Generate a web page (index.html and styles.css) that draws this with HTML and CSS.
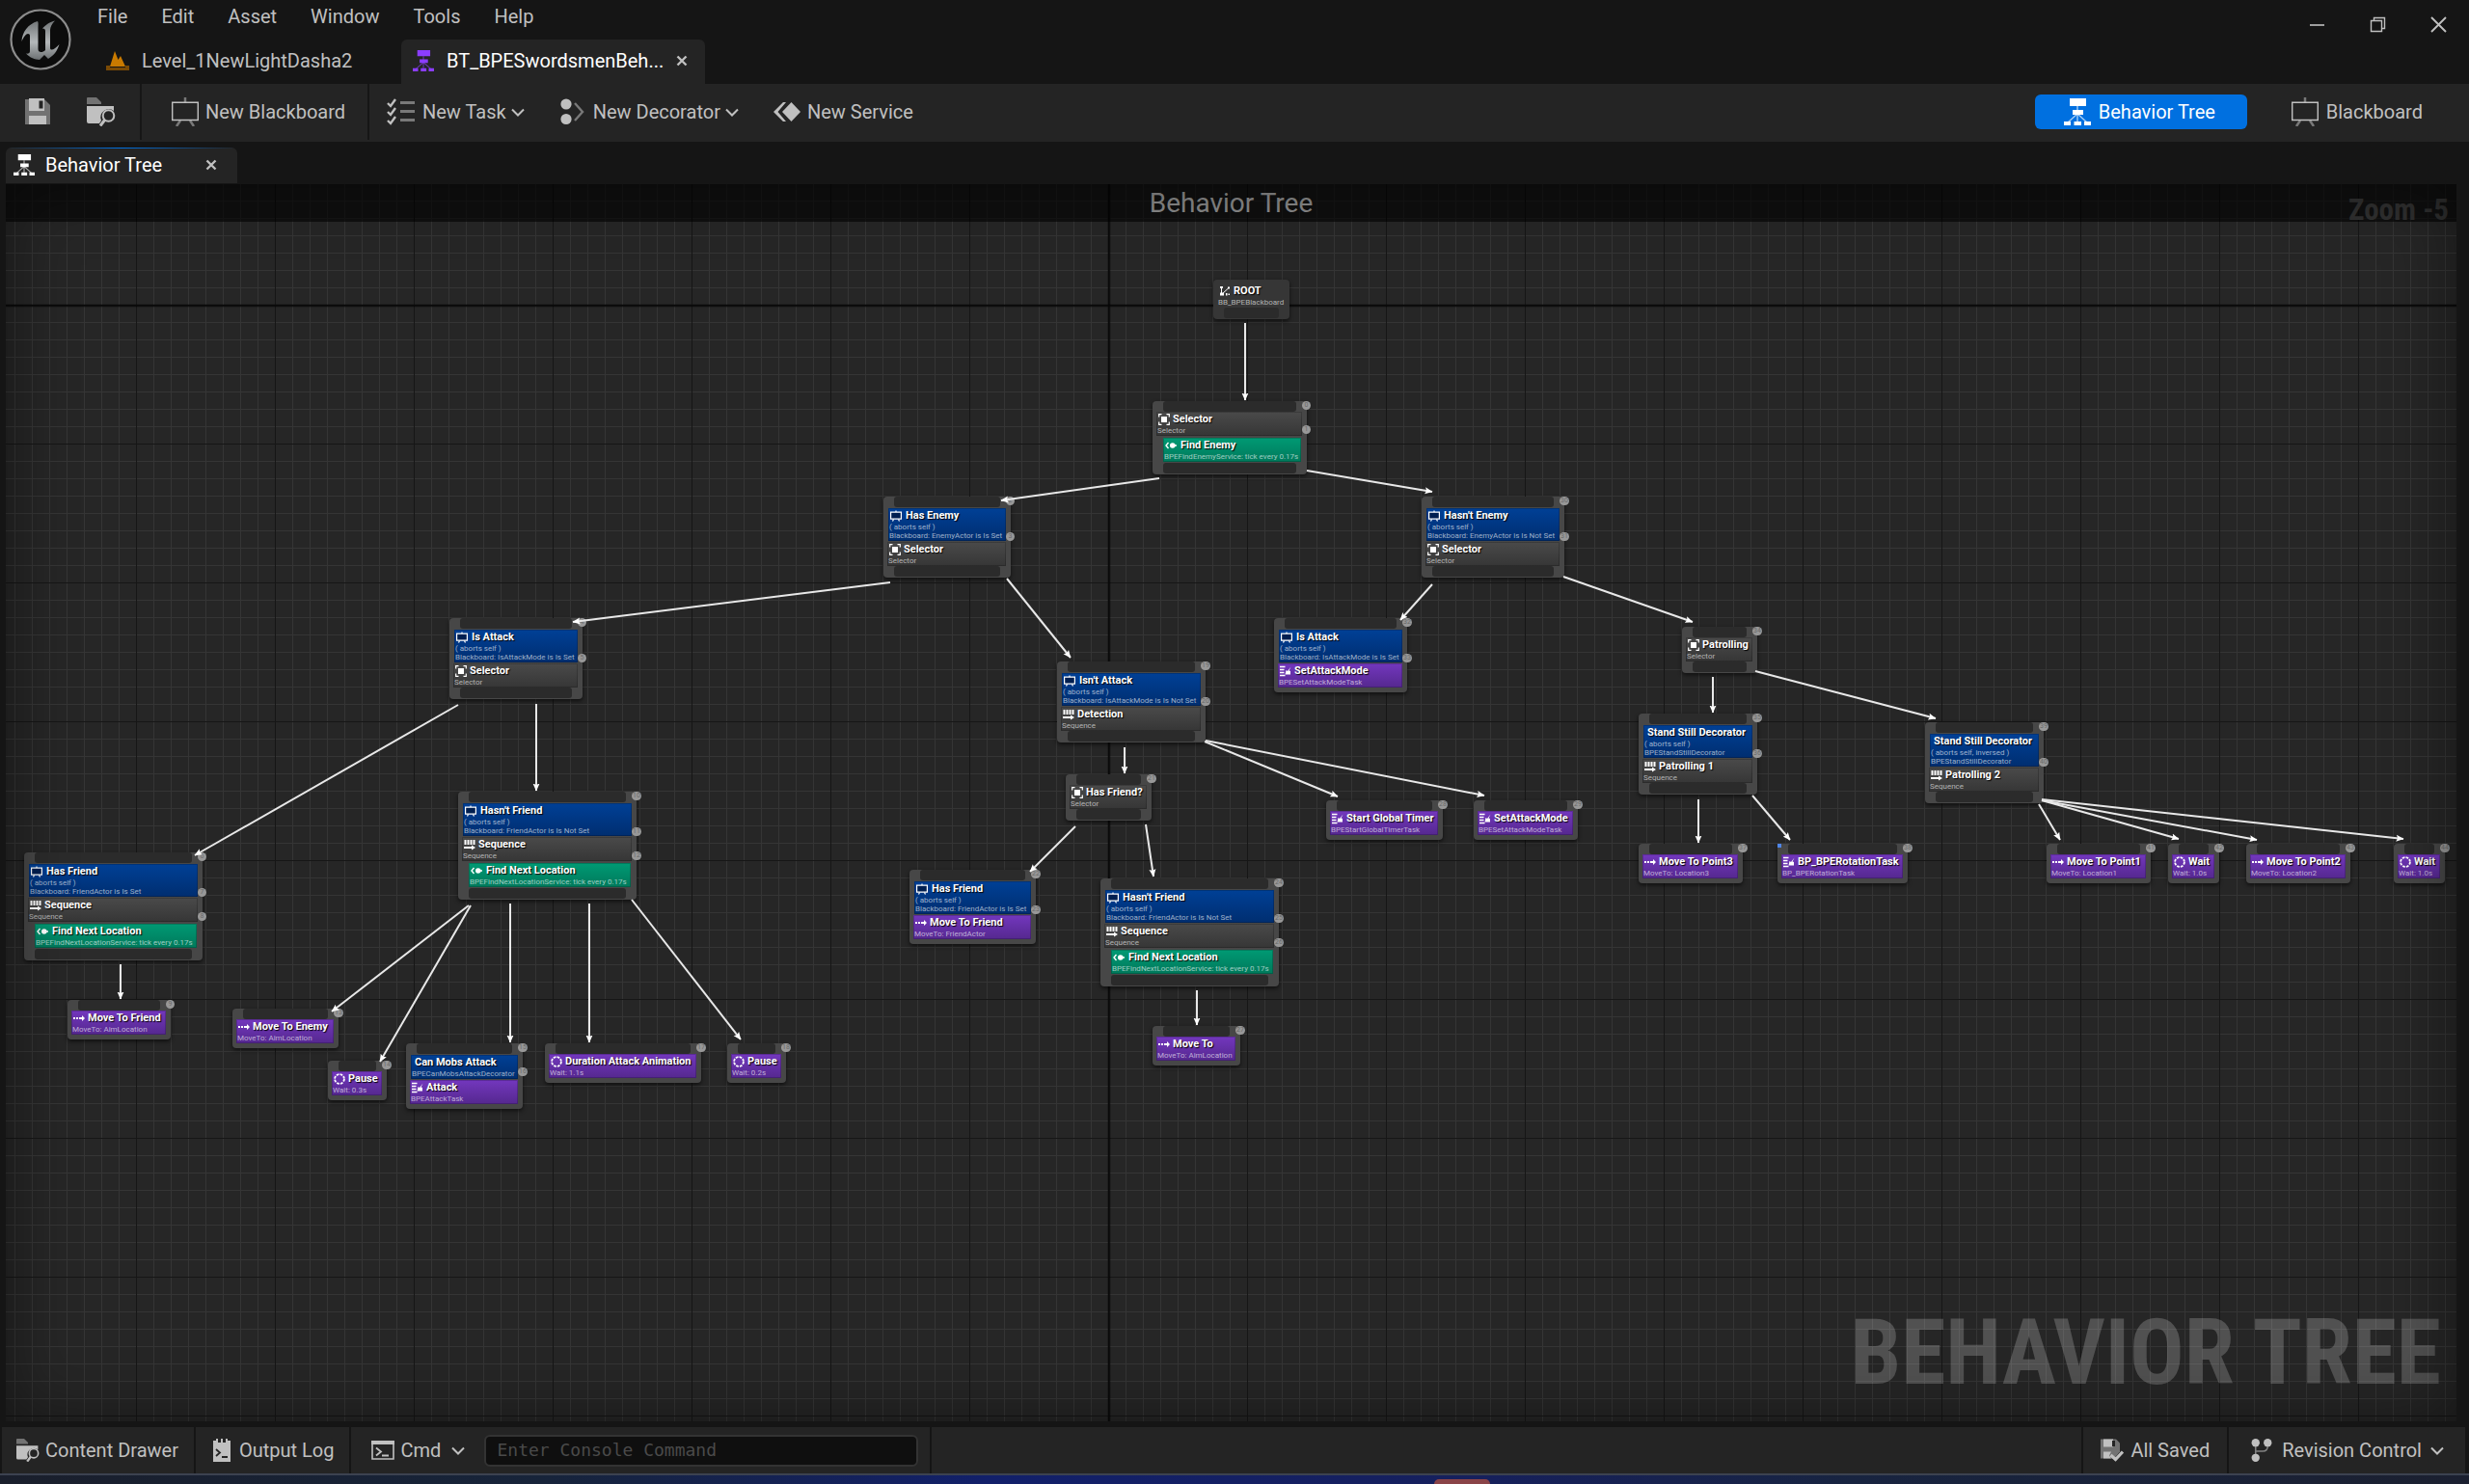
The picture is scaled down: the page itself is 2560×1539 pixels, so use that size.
FILE: index.html
```html
<!DOCTYPE html>
<html lang="en">
<head>
<meta charset="utf-8">
<title>BT_BPESwordsmenBehavior</title>
<link rel="stylesheet" href="styles.css">
</head>
<body>
<svg class="defs" aria-hidden="true">
  <symbol id="i-tree" viewBox="0 0 28 28">
    <path d="M14 8v16M14 16L4 25M14 16l10 9" fill="none" stroke="currentColor" stroke-width="1.4" opacity=".65"/>
    <path d="M6 0h17v8H6zM9 12h11v5H9zM0 24h7v4H0zM10.500 24h7.500v4h-7.500zM21 24h7v4h-7z" fill="currentColor"/>
  </symbol>
  <symbol id="i-board" viewBox="0 0 28 30">
    <path d="M14 0v5M9 24l-4 6M19 24l4 6" fill="none" stroke="currentColor" stroke-width="2.500" opacity=".55"/>
    <path d="M.7 5.200h26.600v18.300H.7z" fill="none" stroke="currentColor" stroke-width="1.400"/>
  </symbol>
  <symbol id="i-save" viewBox="0 0 28 28">
    <path d="M1 1h20l6 6v20H1z" fill="currentColor" opacity=".5"/>
    <path d="M5 0h12v13H5zM5 18h18v9H5z" fill="currentColor"/><path d="M16 0h5v13h-5z" fill="currentColor"/><path d="M15.500 2.500h4v8h-4z" fill="#242424"/>
  </symbol>
  <symbol id="i-browse" viewBox="0 0 30 30">
    <path d="M0 7V1q0-1 1-1h9l5 5v2z" fill="currentColor" opacity=".5"/>
    <path d="M0 9h28v5a8.500 8.500 0 0 0-13 10l-2 3H2q-2 0-2-2z" fill="currentColor"/>
    <circle cx="22.500" cy="19" r="5.800" fill="none" stroke="currentColor" stroke-width="2"/>
    <path d="M18.500 23.500L14 29.500" stroke="currentColor" stroke-width="3"/>
  </symbol>
  <symbol id="i-task" viewBox="0 0 30 28">
    <path d="M1 5l3 3L9 1M1 14l3 3 5-7M1 23l3 3 5-7" fill="none" stroke="currentColor" stroke-width="2.400"/>
    <path d="M14 3h15v3H14zM14 12h15v3H14zM14 21h15v3H14z" fill="currentColor" opacity=".55"/>
  </symbol>
  <symbol id="i-deco" viewBox="0 0 26 28">
    <circle cx="6" cy="6" r="5.600" fill="currentColor"/><circle cx="6" cy="21.500" r="5.600" fill="currentColor"/>
    <path d="M15 5l8 9-8 9" fill="none" stroke="currentColor" stroke-width="2.400" opacity=".55"/>
  </symbol>
  <symbol id="i-serv" viewBox="0 0 28 20">
    <path d="M18.500 0l9.500 10-9.500 10L9 10z" fill="currentColor"/>
    <path d="M10 0h3L4.500 10 13 20h-3L0 10z" fill="currentColor"/>
  </symbol>
  <symbol id="i-chev" viewBox="0 0 14 9"><path d="M1 1.500l6 6 6-6" fill="none" stroke="currentColor" stroke-width="2"/></symbol>
  <symbol id="i-x" viewBox="0 0 12 12"><path d="M1.500 1.500l9 9M10.500 1.500l-9 9" stroke="currentColor" stroke-width="2.400"/></symbol>
  <symbol id="i-level" viewBox="0 0 24 20">
    <path d="M0 17h24v3H0zM0 15h4v3H0zM20 15h4v3h-4z" fill="#7a4a05"/>
    <path d="M4 16L9 0l3.500 9L15 5l5 11z" fill="#c97a00"/>
  </symbol>
  <symbol id="i-log" viewBox="0 0 18 24">
    <path d="M0 2h3V0h2v4h3V0h2v4h3V0h2v2h3v22H0z" fill="currentColor"/>
    <path d="M3 11l4 3.500L3 18M9 19h6" fill="none" stroke="#242424" stroke-width="1.800"/>
  </symbol>
  <symbol id="i-cmd" viewBox="0 0 24 20">
    <path d="M1 1h22v18H1z" fill="none" stroke="currentColor" stroke-width="1.600"/><path d="M0 0h24v4H0z" fill="currentColor"/>
    <path d="M5 7.500l5 4-5 4M11 15.500h7" fill="none" stroke="currentColor" stroke-width="1.800"/>
  </symbol>
  <symbol id="i-saved" viewBox="0 0 24 23">
    <path d="M0 0h16l4 4v9l-6 7H0z" fill="currentColor" opacity=".5"/>
    <path d="M3 0h10v8H3zM3 13h8l-2 4 2 3H3z" fill="currentColor"/><path d="M12 1.500h3v6h-3z" fill="#242424"/>
    <path d="M10.500 16.500l5 4.500L23 13" fill="none" stroke="currentColor" stroke-width="3.200"/>
  </symbol>
  <symbol id="i-branch" viewBox="0 0 20 23">
    <circle cx="4" cy="4" r="4" fill="currentColor"/><circle cx="16" cy="4" r="4" fill="currentColor"/><circle cx="4" cy="19" r="4" fill="currentColor"/>
    <path d="M4 4v15M4 12.500h7q5 0 5-5V4" fill="none" stroke="currentColor" stroke-width="1.500" opacity=".6"/>
  </symbol>
  <symbol id="n-root" viewBox="0 0 12 12"><path d="M2.500 2v7.500L9.500 3" fill="none" stroke="currentColor"/><path d="M1 1h3v2H1zM9 1.500h2v2H9zM1 7.500h4v3H1zM7 8h1.500v2.500H7zM9.500 8.500h1.500v1.500H9.500z" fill="currentColor"/></symbol>
  <symbol id="n-sel" viewBox="0 0 12 12"><path d="M.7 3.500V.7h2.800M8.500.7h2.800v2.800M11.300 8.500v2.800H8.500M3.500 11.300H.7V8.500" fill="none" stroke="currentColor" stroke-width="1.200"/><path d="M3 3h6v6H3z" fill="currentColor"/></symbol>
  <symbol id="n-seq" viewBox="0 0 12 12"><path d="M.5 1h2v5h-2zM3.500 1h2v5h-2zM6.500 1h2v5h-2zM9.500 1h2v5h-2z" fill="currentColor"/><path d="M0 8h8V6.500l4 2.500-4 2.500V10H0z" fill="currentColor"/></symbol>
  <symbol id="n-bb" viewBox="0 0 12 12"><path d="M.6 2.200h10.800v7H.6z" fill="#001f50" stroke="currentColor" stroke-width="1.200"/><path d="M6 .5v1.500M3.500 9.500l-1 2M8.500 9.500l1 2" stroke="currentColor" stroke-width="1.200"/></symbol>
  <symbol id="n-srv" viewBox="0 0 12 12"><circle cx="7.800" cy="6" r="2.800" fill="currentColor"/><path d="M10 6h2M3.500 3L1 6l2.500 3" fill="none" stroke="currentColor" stroke-width="1.400"/></symbol>
  <symbol id="n-move" viewBox="0 0 12 12"><path d="M0 5h2v2H0zM3 5h2v2H3zM6 5h3V3l3 3-3 3V7H6z" fill="currentColor"/></symbol>
  <symbol id="n-task" viewBox="0 0 12 12"><path d="M0 1.500h5.500M0 4.500h4.500M0 7.500h4.500M0 10.500h5.500" stroke="currentColor" stroke-width="1.400"/><path d="M11.500 1.500L9.500 5.500 11 6v3.500L5.500 9.500 6.500 5l1.500 1z" fill="currentColor"/></symbol>
  <symbol id="n-wait" viewBox="0 0 12 12"><circle cx="6" cy="6" r="4.900" fill="none" stroke="currentColor" stroke-width="1.800" stroke-dasharray="2.700 1.150"/></symbol>
</svg>

<header class="titlebar">
  <svg class="logo" viewBox="0 0 64 64" role="img" aria-label="Unreal Engine">
    <defs><linearGradient id="lg" x1="0" y1="0" x2="0" y2="1"><stop offset="0" stop-color="#707476"/><stop offset=".55" stop-color="#b4b8ba"/><stop offset="1" stop-color="#6c7072"/></linearGradient></defs>
    <circle cx="32" cy="32" r="30.500" fill="#0c0c0c" stroke="#8c8c8c" stroke-width="2.200"/>
    <path fill="url(#lg)" d="M29 13C19 16 13 24 12.500 34c2-5 4.500-8 6.500-8 1.300 0 2 .8 2 2v16c0 2-1.500 3-4 2.600 4 4.400 9 6.400 14 6.400l5-5 4 4c6-3.500 9.500-8.500 11.500-15-3 3.500-6 5.500-8 5.500-1 0-1.500-.6-1.500-1.800V22c0-3 2-6.500 5-9.500-5 1-10 4.500-13 8 1.800 0 3 .8 3 2.500v20c-1.500 1.500-3 2-4.500 2-1.800 0-3-1.200-3-3.300V19.500c0-3 .5-4.700-.5-6.500z"/>
  </svg>
  <div class="titlebar-main">
    <nav class="menu">
      <button>File</button><button>Edit</button><button>Asset</button><button>Window</button><button>Tools</button><button>Help</button>
    </nav>
    <div class="doc-tabs">
      <button class="doc-tab"><svg class="ic-level"><use href="#i-level"/></svg><span>Level_1NewLightDasha2</span></button>
      <button class="doc-tab doc-tab-active"><svg class="ic-tab purple"><use href="#i-tree"/></svg><span>BT_BPESwordsmenBeh...</span><svg class="ic-x"><use href="#i-x"/></svg></button>
    </div>
  </div>
  <div class="window-controls">
    <button aria-label="Minimize"><svg viewBox="0 0 17 17"><path d="M1 9h15" stroke="currentColor" stroke-width="1.600"/></svg></button>
    <button aria-label="Restore"><svg viewBox="0 0 17 17"><path d="M1.500 4.500h11v11h-11zM4.500 4V1.500h11v11H13" fill="none" stroke="currentColor" stroke-width="1.400"/></svg></button>
    <button aria-label="Close"><svg viewBox="0 0 17 17"><path d="M1 1l15 15M16 1L1 16" stroke="currentColor" stroke-width="1.900"/></svg></button>
  </div>
</header>

<div class="toolbar">
  <div class="tool-group tool-files">
    <button class="tool" aria-label="Save"><svg class="ic28"><use href="#i-save"/></svg></button>
    <button class="tool" aria-label="Browse"><svg class="ic30"><use href="#i-browse"/></svg></button>
  </div>
  <div class="tool-group tool-board">
    <button class="tool"><svg class="ic-board"><use href="#i-board"/></svg>New Blackboard</button>
  </div>
  <div class="tool-group tool-new">
    <button class="tool"><svg class="ic30"><use href="#i-task"/></svg>New Task<svg class="ic-chev"><use href="#i-chev"/></svg></button>
    <button class="tool"><svg class="ic28"><use href="#i-deco"/></svg>New Decorator<svg class="ic-chev"><use href="#i-chev"/></svg></button>
    <button class="tool"><svg class="ic28"><use href="#i-serv"/></svg>New Service</button>
  </div>
  <div class="modes">
    <button class="mode mode-active"><svg class="ic28"><use href="#i-tree"/></svg>Behavior Tree</button>
    <button class="mode"><svg class="ic-board"><use href="#i-board"/></svg>Blackboard</button>
  </div>
</div>

<div class="panel-tabs">
  <button class="panel-tab"><svg class="ic-tab"><use href="#i-tree"/></svg><span>Behavior Tree</span><svg class="ic-x"><use href="#i-x"/></svg></button>
</div>

<main class="graph">
  <div class="graph-title"><h1>Behavior Tree</h1></div>
  <div class="zoom">Zoom -5</div>
  <div class="watermark">BEHAVIOR TREE</div>

  <article class="node root" style="--x:1252;--y:99;--w:79">
    <div class="root-part"><h2><svg><use href="#n-root"/></svg>ROOT</h2><p>BB_BPEBlackboard</p></div><div class="slot"></div>
  </article>

  <article class="node" style="--x:1189;--y:225;--w:160">
    <div class="slot"></div>
    <div class="part composite"><h2><svg><use href="#n-sel"/></svg>Selector</h2><p>Selector</p></div>
    <div class="part service"><h2><svg><use href="#n-srv"/></svg>Find Enemy</h2><p>BPEFindEnemyService: tick every 0.17s</p></div>
    <div class="slot"></div><div class="index"><b>0</b><b class="near">1</b></div>
  </article>

  <article class="node" style="--x:910;--y:324;--w:132">
    <div class="slot"></div>
    <div class="part decorator"><h2><svg><use href="#n-bb"/></svg>Has Enemy</h2><p>( aborts self )</p><p>Blackboard: EnemyActor is Is Set</p></div>
    <div class="part composite"><h2><svg><use href="#n-sel"/></svg>Selector</h2><p>Selector</p></div>
    <div class="slot"></div><div class="index"><b>2</b><b class="far">3</b></div>
  </article>

  <article class="node" style="--x:1468;--y:324;--w:148">
    <div class="slot"></div>
    <div class="part decorator"><h2><svg><use href="#n-bb"/></svg>Hasn't Enemy</h2><p>( aborts self )</p><p>Blackboard: EnemyActor is Is Not Set</p></div>
    <div class="part composite"><h2><svg><use href="#n-sel"/></svg>Selector</h2><p>Selector</p></div>
    <div class="slot"></div><div class="index"><b>30</b><b class="far">31</b></div>
  </article>

  <article class="node" style="--x:460;--y:450;--w:138">
    <div class="slot"></div>
    <div class="part decorator"><h2><svg><use href="#n-bb"/></svg>Is Attack</h2><p>( aborts self )</p><p>Blackboard: IsAttackMode is Is Set</p></div>
    <div class="part composite"><h2><svg><use href="#n-sel"/></svg>Selector</h2><p>Selector</p></div>
    <div class="slot"></div><div class="index"><b>4</b><b class="far">5</b></div>
  </article>

  <article class="node" style="--x:1090;--y:495;--w:154">
    <div class="slot"></div>
    <div class="part decorator"><h2><svg><use href="#n-bb"/></svg>Isn't Attack</h2><p>( aborts self )</p><p>Blackboard: IsAttackMode is Is Not Set</p></div>
    <div class="part composite"><h2><svg><use href="#n-seq"/></svg>Detection</h2><p>Sequence</p></div>
    <div class="slot"></div><div class="index"><b>19</b><b class="far">20</b></div>
  </article>

  <article class="node leaf" style="--x:1315;--y:450;--w:138">
    <div class="slot"></div>
    <div class="part decorator"><h2><svg><use href="#n-bb"/></svg>Is Attack</h2><p>( aborts self )</p><p>Blackboard: IsAttackMode is Is Set</p></div>
    <div class="part task"><h2><svg><use href="#n-task"/></svg>SetAttackMode</h2><p>BPESetAttackModeTask</p></div>
    <div class="index"><b>32</b><b class="far">33</b></div>
  </article>

  <article class="node" style="--x:1738;--y:459;--w:78">
    <div class="slot"></div>
    <div class="part composite"><h2><svg><use href="#n-sel"/></svg>Patrolling</h2><p>Selector</p></div>
    <div class="slot"></div><div class="index"><b>34</b></div>
  </article>

  <article class="node" style="--x:19;--y:693;--w:185">
    <div class="slot"></div>
    <div class="part decorator"><h2><svg><use href="#n-bb"/></svg>Has Friend</h2><p>( aborts self )</p><p>Blackboard: FriendActor is Is Set</p></div>
    <div class="part composite"><h2><svg><use href="#n-seq"/></svg>Sequence</h2><p>Sequence</p></div>
    <div class="part service"><h2><svg><use href="#n-srv"/></svg>Find Next Location</h2><p>BPEFindNextLocationService: tick every 0.17s</p></div>
    <div class="slot"></div><div class="index"><b>6</b><b class="far">7</b><b class="near">8</b></div>
  </article>

  <article class="node leaf" style="--x:64;--y:846;--w:107">
    <div class="slot"></div>
    <div class="part task"><h2><svg><use href="#n-move"/></svg>Move To Friend</h2><p>MoveTo: AimLocation</p></div>
    <div class="index"><b>9</b></div>
  </article>

  <article class="node" style="--x:469;--y:630;--w:185">
    <div class="slot"></div>
    <div class="part decorator"><h2><svg><use href="#n-bb"/></svg>Hasn't Friend</h2><p>( aborts self )</p><p>Blackboard: FriendActor is Is Not Set</p></div>
    <div class="part composite"><h2><svg><use href="#n-seq"/></svg>Sequence</h2><p>Sequence</p></div>
    <div class="part service"><h2><svg><use href="#n-srv"/></svg>Find Next Location</h2><p>BPEFindNextLocationService: tick every 0.17s</p></div>
    <div class="slot"></div><div class="index"><b>10</b><b class="far">11</b><b class="near">12</b></div>
  </article>

  <article class="node leaf" style="--x:235;--y:855;--w:110">
    <div class="slot"></div>
    <div class="part task"><h2><svg><use href="#n-move"/></svg>Move To Enemy</h2><p>MoveTo: AimLocation</p></div>
    <div class="index"><b>13</b></div>
  </article>

  <article class="node leaf" style="--x:334;--y:909;--w:61">
    <div class="slot"></div>
    <div class="part task"><h2><svg><use href="#n-wait"/></svg>Pause</h2><p>Wait: 0.3s</p></div>
    <div class="index"><b>14</b></div>
  </article>

  <article class="node leaf" style="--x:415;--y:891;--w:121">
    <div class="slot"></div>
    <div class="part decorator plain"><h2>Can Mobs Attack</h2><p>BPECanMobsAttackDecorator</p></div>
    <div class="part task"><h2><svg><use href="#n-task"/></svg>Attack</h2><p>BPEAttackTask</p></div>
    <div class="index"><b>15</b><b class="near">16</b></div>
  </article>

  <article class="node leaf" style="--x:559;--y:891;--w:162">
    <div class="slot"></div>
    <div class="part task"><h2><svg><use href="#n-wait"/></svg>Duration Attack Animation</h2><p>Wait: 1.1s</p></div>
    <div class="index"><b>17</b></div>
  </article>

  <article class="node leaf" style="--x:748;--y:891;--w:61">
    <div class="slot"></div>
    <div class="part task"><h2><svg><use href="#n-wait"/></svg>Pause</h2><p>Wait: 0.2s</p></div>
    <div class="index"><b>18</b></div>
  </article>

  <article class="node" style="--x:1099;--y:612;--w:89">
    <div class="slot"></div>
    <div class="part composite"><h2><svg><use href="#n-sel"/></svg>Has Friend?</h2><p>Selector</p></div>
    <div class="slot"></div><div class="index"><b>21</b></div>
  </article>

  <article class="node leaf" style="--x:1369;--y:639;--w:121">
    <div class="slot"></div>
    <div class="part task"><h2><svg><use href="#n-task"/></svg>Start Global Timer</h2><p>BPEStartGlobalTimerTask</p></div>
    <div class="index"><b>28</b></div>
  </article>

  <article class="node leaf" style="--x:1522;--y:639;--w:108">
    <div class="slot"></div>
    <div class="part task"><h2><svg><use href="#n-task"/></svg>SetAttackMode</h2><p>BPESetAttackModeTask</p></div>
    <div class="index"><b>29</b></div>
  </article>

  <article class="node leaf" style="--x:937;--y:711;--w:131">
    <div class="slot"></div>
    <div class="part decorator"><h2><svg><use href="#n-bb"/></svg>Has Friend</h2><p>( aborts self )</p><p>Blackboard: FriendActor is Is Set</p></div>
    <div class="part task"><h2><svg><use href="#n-move"/></svg>Move To Friend</h2><p>MoveTo: FriendActor</p></div>
    <div class="index"><b>22</b><b class="far">23</b></div>
  </article>

  <article class="node" style="--x:1135;--y:720;--w:185">
    <div class="slot"></div>
    <div class="part decorator"><h2><svg><use href="#n-bb"/></svg>Hasn't Friend</h2><p>( aborts self )</p><p>Blackboard: FriendActor is Is Not Set</p></div>
    <div class="part composite"><h2><svg><use href="#n-seq"/></svg>Sequence</h2><p>Sequence</p></div>
    <div class="part service"><h2><svg><use href="#n-srv"/></svg>Find Next Location</h2><p>BPEFindNextLocationService: tick every 0.17s</p></div>
    <div class="slot"></div><div class="index"><b>24</b><b class="far">25</b><b class="near">26</b></div>
  </article>

  <article class="node leaf" style="--x:1189;--y:873;--w:91">
    <div class="slot"></div>
    <div class="part task"><h2><svg><use href="#n-move"/></svg>Move To</h2><p>MoveTo: AimLocation</p></div>
    <div class="index"><b>27</b></div>
  </article>

  <article class="node" style="--x:1693;--y:549;--w:123">
    <div class="slot"></div>
    <div class="part decorator plain"><h2>Stand Still Decorator</h2><p>( aborts self )</p><p>BPEStandStillDecorator</p></div>
    <div class="part composite"><h2><svg><use href="#n-seq"/></svg>Patrolling 1</h2><p>Sequence</p></div>
    <div class="slot"></div><div class="index"><b>35</b><b class="far">36</b></div>
  </article>

  <article class="node" style="--x:1990;--y:558;--w:123">
    <div class="slot"></div>
    <div class="part decorator plain"><h2>Stand Still Decorator</h2><p>( aborts self, inversed )</p><p>BPEStandStillDecorator</p></div>
    <div class="part composite"><h2><svg><use href="#n-seq"/></svg>Patrolling 2</h2><p>Sequence</p></div>
    <div class="slot"></div><div class="index"><b>39</b><b class="far">40</b></div>
  </article>

  <article class="node leaf" style="--x:1693;--y:684;--w:108">
    <div class="slot"></div>
    <div class="part task"><h2><svg><use href="#n-move"/></svg>Move To Point3</h2><p>MoveTo: Location3</p></div>
    <div class="index"><b>37</b></div>
  </article>

  <article class="node leaf blueprint" style="--x:1837;--y:684;--w:135">
    <div class="slot"></div>
    <div class="part task"><h2><svg><use href="#n-task"/></svg>BP_BPERotationTask</h2><p>BP_BPERotationTask</p></div>
    <div class="index"><b>38</b></div>
  </article>

  <article class="node leaf" style="--x:2116;--y:684;--w:108">
    <div class="slot"></div>
    <div class="part task"><h2><svg><use href="#n-move"/></svg>Move To Point1</h2><p>MoveTo: Location1</p></div>
    <div class="index"><b>41</b></div>
  </article>

  <article class="node leaf" style="--x:2242;--y:684;--w:53">
    <div class="slot"></div>
    <div class="part task"><h2><svg><use href="#n-wait"/></svg>Wait</h2><p>Wait: 1.0s</p></div>
    <div class="index"><b>42</b></div>
  </article>

  <article class="node leaf" style="--x:2323;--y:684;--w:108">
    <div class="slot"></div>
    <div class="part task"><h2><svg><use href="#n-move"/></svg>Move To Point2</h2><p>MoveTo: Location2</p></div>
    <div class="index"><b>43</b></div>
  </article>

  <article class="node leaf" style="--x:2476;--y:684;--w:53">
    <div class="slot"></div>
    <div class="part task"><h2><svg><use href="#n-wait"/></svg>Wait</h2><p>Wait: 1.0s</p></div>
    <div class="index"><b>44</b></div>
  </article>

  <svg class="wires" aria-hidden="true">
    <defs><marker id="arrow" viewBox="0 0 8 8" refX="7.500" refY="4" markerWidth="8" markerHeight="8" markerUnits="userSpaceOnUse" orient="auto"><path d="M0 .5L8 4 0 7.500 1.500 4z" fill="#fff"/></marker></defs>
    <g transform="translate(-6 -191)">
      <path d="M1291 335V415"/><path d="M1202 496L1038 519"/><path d="M1355 488L1485 510"/>
      <path d="M923 604L594 645"/><path d="M1044 600L1110 682"/>
      <path d="M475 731L202 887"/><path d="M556 730V820"/><path d="M125 1000V1036"/>
      <path d="M486 939L344 1049"/><path d="M488 939L394 1101"/><path d="M529 937V1081"/><path d="M611 937V1081"/><path d="M655 933L768 1078"/>
      <path d="M1166 775V802"/><path d="M1249 769L1387 826"/><path d="M1250 768L1539 825"/>
      <path d="M1115 857L1068 904"/><path d="M1188 855L1196 909"/><path d="M1241 1027V1063"/>
      <path d="M1485 606L1452 643"/><path d="M1621 598L1755 645"/>
      <path d="M1776 702V739"/><path d="M1820 696L2007 745"/>
      <path d="M1761 829V874"/><path d="M1817 825L1856 871"/>
      <path d="M2114 834L2136 871"/><path d="M2117 830L2259 870"/><path d="M2117 830L2340 871"/><path d="M2117 829L2492 870"/>
    </g>
  </svg>
</main>

<footer class="statusbar">
  <button class="status"><svg class="ic24"><use href="#i-browse"/></svg>Content Drawer</button>
  <button class="status"><svg class="ic24"><use href="#i-log"/></svg>Output Log</button>
  <div class="status status-cmd">
    <button class="cmd"><svg class="ic24"><use href="#i-cmd"/></svg>Cmd<svg class="ic-chev"><use href="#i-chev"/></svg></button>
    <input type="text" placeholder="Enter Console Command" aria-label="Console command">
  </div>
  <div class="status status-fill"></div>
  <button class="status status-saved"><svg class="ic24"><use href="#i-saved"/></svg>All Saved</button>
  <button class="status status-rev"><svg class="ic24"><use href="#i-branch"/></svg>Revision Control<svg class="ic-chev"><use href="#i-chev"/></svg></button>
</footer>
<div class="desktop"><span class="desktop-pill"></span></div>
</body>
</html>
```
FILE: styles.css
```css
* { box-sizing: border-box; }

body {
  margin: 0;
  min-height: 100vh;
  display: flex;
  flex-direction: column;
  background: #151515;
  color: #c0c0c0;
  font: 20px/24px Roboto, "Liberation Sans", sans-serif;
  overflow: hidden;
}

button {
  border: 0;
  padding: 0;
  background: none;
  color: inherit;
  font: inherit;
  white-space: nowrap;
  display: flex;
  align-items: center;
}

svg { flex: none; display: block; }
h1, h2, p { margin: 0; font-weight: 400; }
.defs { position: absolute; width: 0; height: 0; }

.ic24 { width: 24px; height: 24px; }
.ic28 { width: 28px; height: 28px; }
.ic30 { width: 30px; height: 30px; }
.ic-board { width: 28px; height: 30px; }
.ic-tab { width: 22px; height: 22px; }
.ic-level { width: 24px; height: 20px; }
.ic-chev { width: 14px; height: 9px; }
.ic-x { width: 12px; height: 12px; color: #c0c0c0; }
.purple { color: #8b3dff; }

/* Title bar */
.titlebar { display: flex; height: 87px; padding-left: 10px; }
.logo { width: 64px; height: 64px; margin-top: 9px; }
.titlebar-main { flex: 1; display: flex; flex-direction: column; justify-content: space-between; }
.menu { display: flex; gap: 35px; padding: 5px 0 0 27px; }
.doc-tabs { display: flex; padding-left: 20px; }
.doc-tab { height: 46px; width: 322px; padding: 0 12px 2px 16px; gap: 13px; }
.doc-tab-active { width: 315px; padding: 0 22px 2px 12px; background: #242424; color: #fff; border-radius: 6px 6px 0 0; }
.doc-tab-active span { flex: 1; text-align: left; }
.window-controls { display: flex; align-items: flex-start; gap: 46px; padding: 17px 23px 0 0; }
.window-controls svg { width: 17px; height: 17px; }

/* Toolbar */
.toolbar { display: flex; height: 60px; background: #242424; }
.tool-group { display: flex; align-items: stretch; margin-bottom: 2px; }
.tool-group + .tool-group { border-left: 2px solid #161616; }
.tool-files { width: 145px; padding-left: 25px; gap: 37px; }
.tool-board { width: 236px; padding-left: 31px; }
.tool-new { padding-left: 18px; gap: 36px; }
.tool { gap: 7px; }
.tool .ic-chev { margin-left: -2px; }
.modes { margin-left: auto; display: flex; align-items: center; gap: 46px; padding-right: 48px; margin-bottom: 2px; }
.mode { height: 36px; gap: 8px; }
.mode-active { width: 220px; padding-left: 30px; border-radius: 6px; background: #0070e0; color: #fff; }

/* Panel tab strip */
.panel-tabs { height: 44px; padding: 6px 6px 0; }
.panel-tab {
  width: 240px;
  height: 37px;
  padding: 0 21px 2px 8px;
  gap: 11px;
  color: #fff;
  border-radius: 6px 6px 0 0;
  background: linear-gradient(90deg, transparent, #0070e0 50%, transparent) top / 100% 1px no-repeat, #242424;
}
.panel-tab span { flex: 1; text-align: left; }

/* Graph canvas */
.graph {
  flex: 1;
  margin: 0 13px 6px 6px;
  position: relative;
  overflow: hidden;
  background-color: #262626;
  background-image:
    linear-gradient(90deg, #060606 1px, transparent 1px),
    linear-gradient(#060606 1px, transparent 1px),
    linear-gradient(90deg, #161616 1px, transparent 1px),
    linear-gradient(#161616 1px, transparent 1px),
    linear-gradient(90deg, #353535 1px, transparent 1px),
    linear-gradient(#353535 1px, transparent 1px);
  background-size: 4000px 4000px, 4000px 4000px, 144px 144px, 144px 144px, 18px 18px, 18px 18px;
  background-position: 1143px 0, 0 125px, 135px 0, 0 125px, 9px 0, 0 17px;
}
.graph::after {
  content: "";
  position: absolute;
  inset: 0;
  box-shadow: inset 0 0 70px rgba(0, 0, 0, .45);
  pointer-events: none;
}
.graph-title { height: 39px; background: rgba(0, 0, 0, .6); text-align: center; }
.graph-title h1 { font-size: 28px; line-height: 40px; color: #8c8c8c; }
.zoom { position: absolute; top: 9px; right: 8px; font: 700 31px/36px "Roboto Condensed", "Liberation Sans Narrow", Roboto, sans-serif; color: #303030; }
.watermark { position: absolute; right: 16px; bottom: 16px; font: 700 94px/110px "Roboto Condensed", "Liberation Sans Narrow", Roboto, sans-serif; color: rgba(255, 255, 255, .2); }
.wires { position: absolute; inset: 0; width: 100%; height: 100%; }
.wires g path { fill: none; stroke: #e8e8e8; stroke-width: 2; marker-end: url(#arrow); }

/* Tree nodes */
.node {
  position: absolute;
  left: calc(var(--x) * 1px);
  top: calc(var(--y) * 1px);
  width: calc(var(--w) * 1px);
  padding: 0 5px 1px 4px;
  border-radius: 4px;
  background: #474747;
  box-shadow: 0 2px 4px rgba(0, 0, 0, .6);
}
.leaf { padding-bottom: 5px; }
.root { background: #363636; }
.slot { height: 11px; margin: 0 6px 0 7px; border-radius: 3px; background: #2b2b2b; }
.part, .root-part { padding: 0 1px 1px; }
.part { box-shadow: inset 0 0 0 1px rgba(0, 0, 0, .2); }
.part h2, .root-part h2 {
  display: flex;
  align-items: center;
  gap: 3px;
  height: 15px;
  padding-left: 1px;
  font-size: 11px;
  line-height: 15px;
  font-weight: 700;
  color: #fff;
  white-space: nowrap;
  text-shadow: 1px 1px 1px #000;
}
.part svg, .root-part svg { width: 12px; height: 12px; }
.part p, .root-part p { font-size: 8px; line-height: 9px; color: rgba(255, 255, 255, .62); white-space: nowrap; }
.composite { background: linear-gradient(#4a4a4a, #363636); }
.decorator { margin: 1px 0 1px 1px; background: linear-gradient(#004096, #002e70); }
.decorator h2 { gap: 4px; }
.decorator.plain h2 { padding-left: 3px; }
.service { margin: 2px 1px 1px 7px; background: linear-gradient(#009a74, #00795b); }
.service h2 { gap: 4px; }
.task { background: linear-gradient(#7337be, #55288f); }
.root-part { padding-top: 4px; }
.blueprint::before { content: ""; position: absolute; left: 0; top: 0; width: 4px; height: 4px; background: #4f86e8; }

.index { position: absolute; top: 0; left: calc(100% - 5px); display: flex; flex-direction: column; }
.index b {
  min-width: 9px;
  height: 9px;
  border-radius: 5px;
  background: #989898;
  color: #6a6a6a;
  font: 7px/9px Roboto, sans-serif;
  text-align: center;
  padding: 0 1px;
}
.index .far { margin-top: 28px; }
.index .near { margin-top: 16px; }

/* Status bar */
.statusbar { display: flex; gap: 2px; height: 48px; padding: 0 4px 0 2px; }
.status { background: #242424; padding: 0 16px 0 15px; gap: 6px; display: flex; align-items: center; }
.status-cmd { width: 600px; padding: 0 12px 0 21px; justify-content: space-between; }
.status-fill { flex: 1; }
.status-saved { padding: 0 18px; gap: 7px; }
.status-rev { padding: 0 22px; gap: 9px; }
.cmd { gap: 6px; }
.cmd .ic-chev { margin-left: 5px; }
.status-cmd input {
  width: 450px;
  height: 33px;
  padding: 0 11px 2px;
  border: 2px solid #333;
  border-radius: 6px;
  background: #0f0f0f;
  color: #c0c0c0;
  font: 18px/24px "DejaVu Sans Mono", monospace;
}
.status-cmd input::placeholder { color: #4a4a4a; opacity: 1; }

.desktop {
  height: 11px;
  border-top: 2px solid #3c4250;
  background: linear-gradient(90deg, #1a1f2c, #17243a 22%, #12206a 40%, #16205c 60%, #182440 75%, #1b2030);
  display: flex;
  justify-content: center;
  align-items: flex-end;
}
.desktop-pill { width: 58px; height: 5px; margin-left: 472px; border-radius: 5px 5px 0 0; background: #8a4448; }
```
